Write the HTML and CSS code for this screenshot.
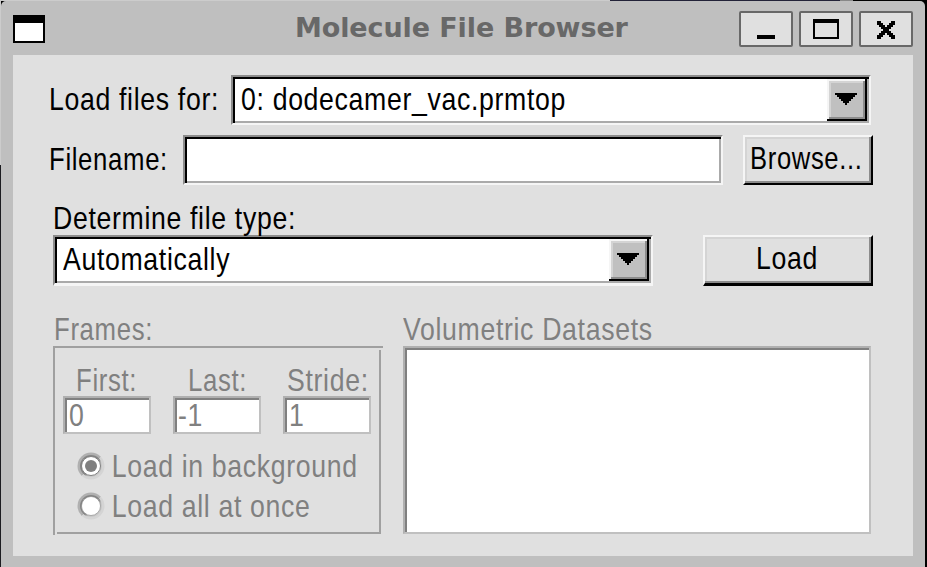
FILE: index.html
```html
<!DOCTYPE html>
<html lang="en">
<head>
<meta charset="utf-8">
<title>Molecule File Browser</title>
<link rel="stylesheet" href="styles.css">
</head>
<body>
<main class="window">
  <header class="titlebar">
    <svg class="sysmenu" width="32" height="28" shape-rendering="crispEdges"><path fill="#000" d="M0 0h32v28H0z"/><path fill="#fff" d="M2 8h28v18H2z"/></svg>
    <h1 class="title">Molecule File Browser</h1>
    <div class="controls">
      <button class="control" aria-label="Minimize"><svg width="50" height="32" shape-rendering="crispEdges"><path d="M16 22h18v4H16z"/></svg></button>
      <button class="control" aria-label="Maximize"><svg width="50" height="32" shape-rendering="crispEdges"><path fill-rule="evenodd" d="M12 6h26v20H12zM14 10v14h22V10z"/></svg></button>
      <button class="control" aria-label="Close"><svg width="50" height="32" shape-rendering="crispEdges"><path transform="translate(16 8) scale(2)" d="M0 0h2v1h-2zM7 0h2v1h-2zM0 1h3v1h-3zM6 1h3v1h-3zM1 2h3v1h-3zM5 2h3v1h-3zM2 3h5v1h-5zM3 4h3v1h-3zM2 5h5v1h-5zM1 6h3v1h-3zM5 6h3v1h-3zM0 7h3v1h-3zM6 7h3v1h-3zM0 8h2v1h-2zM7 8h2v1h-2z"/></svg></button>
    </div>
  </header>
  <section class="content">
    <div class="row">
      <label class="label for"><span class="t">Load files for:</span></label>
      <div class="choice molecule"><span class="t">0: dodecamer_vac.prmtop</span><i class="drop"><svg width="22" height="12" shape-rendering="crispEdges"><path d="M0 0h22v2h-2v2h-2v2h-2v2h-2v2h-2v2h-2v-2H8V8H6V6H4V4H2V2H0z"/></svg></i></div>
    </div>
    <div class="row second">
      <label class="label name"><span class="t tight">Filename:</span></label>
      <div class="field filename"></div>
      <button class="button browse"><span class="t tighter">Browse...</span></button>
    </div>
    <div class="heading type"><span class="t">Determine file type:</span></div>
    <div class="row">
      <div class="choice filetype"><span class="t">Automatically</span><i class="drop"><svg width="22" height="12" shape-rendering="crispEdges"><path d="M0 0h22v2h-2v2h-2v2h-2v2h-2v2h-2v2h-2v-2H8V8H6V6H4V4H2V2H0z"/></svg></i></div>
      <button class="button load"><span class="t">Load</span></button>
    </div>
    <div class="lower">
      <div class="frames">
        <div class="heading"><span class="t tight">Frames:</span></div>
        <div class="group">
          <div class="numbers">
            <div class="number"><div class="caption first"><span class="t tight">First:</span></div><div class="small zero"><span class="t">0</span></div></div>
            <div class="number"><div class="caption last"><span class="t tight">Last:</span></div><div class="small minus"><span class="t">-1</span></div></div>
            <div class="number"><div class="caption stride"><span class="t">Stride:</span></div><div class="small one"><span class="t">1</span></div></div>
          </div>
          <div class="option"><svg class="radio" width="28" height="28"><defs><linearGradient id="rim" x2="1" y2="1"><stop offset=".5" stop-color="#b0b0b0"/><stop offset=".5" stop-color="#d4d4d4"/></linearGradient><linearGradient id="bevel" x2="1" y2="1"><stop offset=".55" stop-color="#858585"/><stop offset=".65" stop-color="#c8c8c8"/></linearGradient></defs><circle cx="14" cy="14" r="13.5" fill="url(#rim)"/><circle cx="14" cy="14" r="11" fill="url(#bevel)"/><circle cx="14" cy="14" r="9.5" fill="#fff" stroke="#808080"/><circle cx="14" cy="14" r="6" fill="#808080"/></svg><span class="t">Load in background</span></div>
          <div class="option"><svg class="radio" width="28" height="28"><circle cx="14" cy="14" r="13.5" fill="url(#rim)"/><circle cx="14" cy="14" r="11" fill="url(#bevel)"/><circle cx="14" cy="14" r="9.5" fill="#fff" stroke="#808080" stroke-opacity=".6"/></svg><span class="t">Load all at once</span></div>
        </div>
      </div>
      <div class="datasets">
        <div class="heading"><span class="t">Volumetric Datasets</span></div>
        <div class="list"></div>
      </div>
    </div>
  </section>
</main>
</body>
</html>
```
FILE: styles.css
```css
* { box-sizing: border-box; }
body {
  margin: 0;
  width: 927px;
  height: 567px;
  overflow: hidden;
  padding: 1px 2px 0 1px;
  background: linear-gradient(90deg, #ccc 0 610px, #222238 610px 840px, #888 840px 853px, #000 853px) 0 0 / 100% 1px no-repeat,
    linear-gradient(#ccc 0 165px, #1c1c20 165px) 0 0 / 1px 100% no-repeat, #000;
  font: 32px/48px "Liberation Sans", sans-serif;
  letter-spacing: .8px;
  color: #000;
}
button { font: inherit; letter-spacing: inherit; color: inherit; padding: 0; margin: 0; border-radius: 0; }
svg { display: block; }
/* condensed lettering */
.t { display: inline-block; white-space: nowrap; transform: scaleX(.833); transform-origin: 0 0; }
.tight { transform: scaleX(.805); }
.window { width: 924px; height: 566px; background: #bfbfbf; border-radius: 5px 5px 0 0; }
.titlebar { height: 54px; padding: 10px 12px 0; display: flex; }
.sysmenu { margin-top: 4px; }
.title {
  flex: 1; margin: 0; padding-left: 250px;
  font: bold 27px/34px "DejaVu Sans", sans-serif;
  letter-spacing: -.1px; color: #686868; white-space: nowrap;
}
.controls { display: flex; gap: 6px; }
.control { width: 54px; height: 36px; background: #e0e0e0; border: 2px solid #686868; border-radius: 2px; }
.content { width: 900px; height: 501px; margin-left: 12px; padding: 20px 40px 0 36px; background: #e0e0e0; overflow: hidden; }
.row { display: flex; white-space: nowrap; height: 50px; }
.second { margin-top: 10px; }
.for { width: 182px; flex: none; }
.name { width: 134px; flex: none; }
.choice, .field {
  flex: none;
  height: 50px; background: #fff;
  border: 2px solid; border-color: #8c8c8c #f5f5f5 #f5f5f5 #8c8c8c;
  box-shadow: inset 2px 2px #000, inset -2px -2px #aaa;
}
.choice { display: flex; justify-content: space-between; padding: 2px 2px 2px 8px; line-height: 40px; }
.molecule { width: 640px; }
.filetype { width: 600px; margin-left: 4px; height: 51px; border-bottom-width: 3px; }
.drop {
  width: 40px; height: 42px; background: #c0c0c0; padding: 14px 8px 0;
  box-shadow: inset -2px -2px #000, inset 2px 2px #f5f5f5, inset -4px -4px #8c8c8c, inset 4px 4px #d4d4d4;
}
.filename { width: 540px; }
.button {
  flex: none; display: flex; align-items: flex-start;
  height: 50px; background: #e0e0e0; line-height: 43px;
  border: 2px solid; border-color: #f5f5f5 #000 #000 #f5f5f5;
  box-shadow: inset -2px -2px #8c8c8c, inset 2px 2px #d4d4d4;
}
.browse { width: 130px; margin-left: 20px; padding-left: 5px; }
.tighter { transform: scaleX(.8); }
.load { width: 170px; height: 51px; border-bottom-width: 3px; margin-left: 50px; padding-left: 51px; }
.heading { height: 35px; line-height: 37px; margin-left: 1px; white-space: nowrap; }
.type { margin: 15px 0 0 4px; }
.lower { display: flex; margin: 26px 0 0 4px; color: #808080; }
.frames { width: 330px; margin-right: 20px; }
.group {
  height: 189px; padding: 16px 0 0 10px;
  background:
    linear-gradient(#a0a0a0, #a0a0a0) 0 0 / 330px 2px no-repeat,
    linear-gradient(#a0a0a0, #a0a0a0) 0 0 / 2px 189px no-repeat,
    linear-gradient(#a0a0a0, #a0a0a0) 326px 4px / 2px 184px no-repeat,
    linear-gradient(#a0a0a0, #a0a0a0) 4px 186px / 324px 2px no-repeat;
}
.numbers { display: flex; gap: 22px; margin-bottom: 12px; }
.number { width: 88px; white-space: nowrap; }
.caption { height: 34px; line-height: 36px; }
.first { padding-left: 13px; }
.last { padding-left: 15px; }
.stride { padding-left: 4px; }
.small {
  height: 38px; background: #fff; line-height: 34px; padding-left: 4px;
  border: 2px solid; border-color: #b0b0b0 #c0c0c0 #c0c0c0 #b0b0b0;
  box-shadow: inset 2px 2px #808080;
}
.minus { padding-left: 3px; }
.option { display: flex; align-items: center; height: 40px; line-height: 40px; padding-left: 14px; white-space: nowrap; }
.option .t { padding-left: 8px; }
.radio { flex: none; }
.datasets { width: 468px; }
.datasets .heading { margin-left: 0; }
.list {
  height: 188px; background: #fff; border: 2px solid; border-color: #b0b0b0 #c0c0c0 #c0c0c0 #b0b0b0;
  box-shadow: inset 2px 2px #808080;
}
```
